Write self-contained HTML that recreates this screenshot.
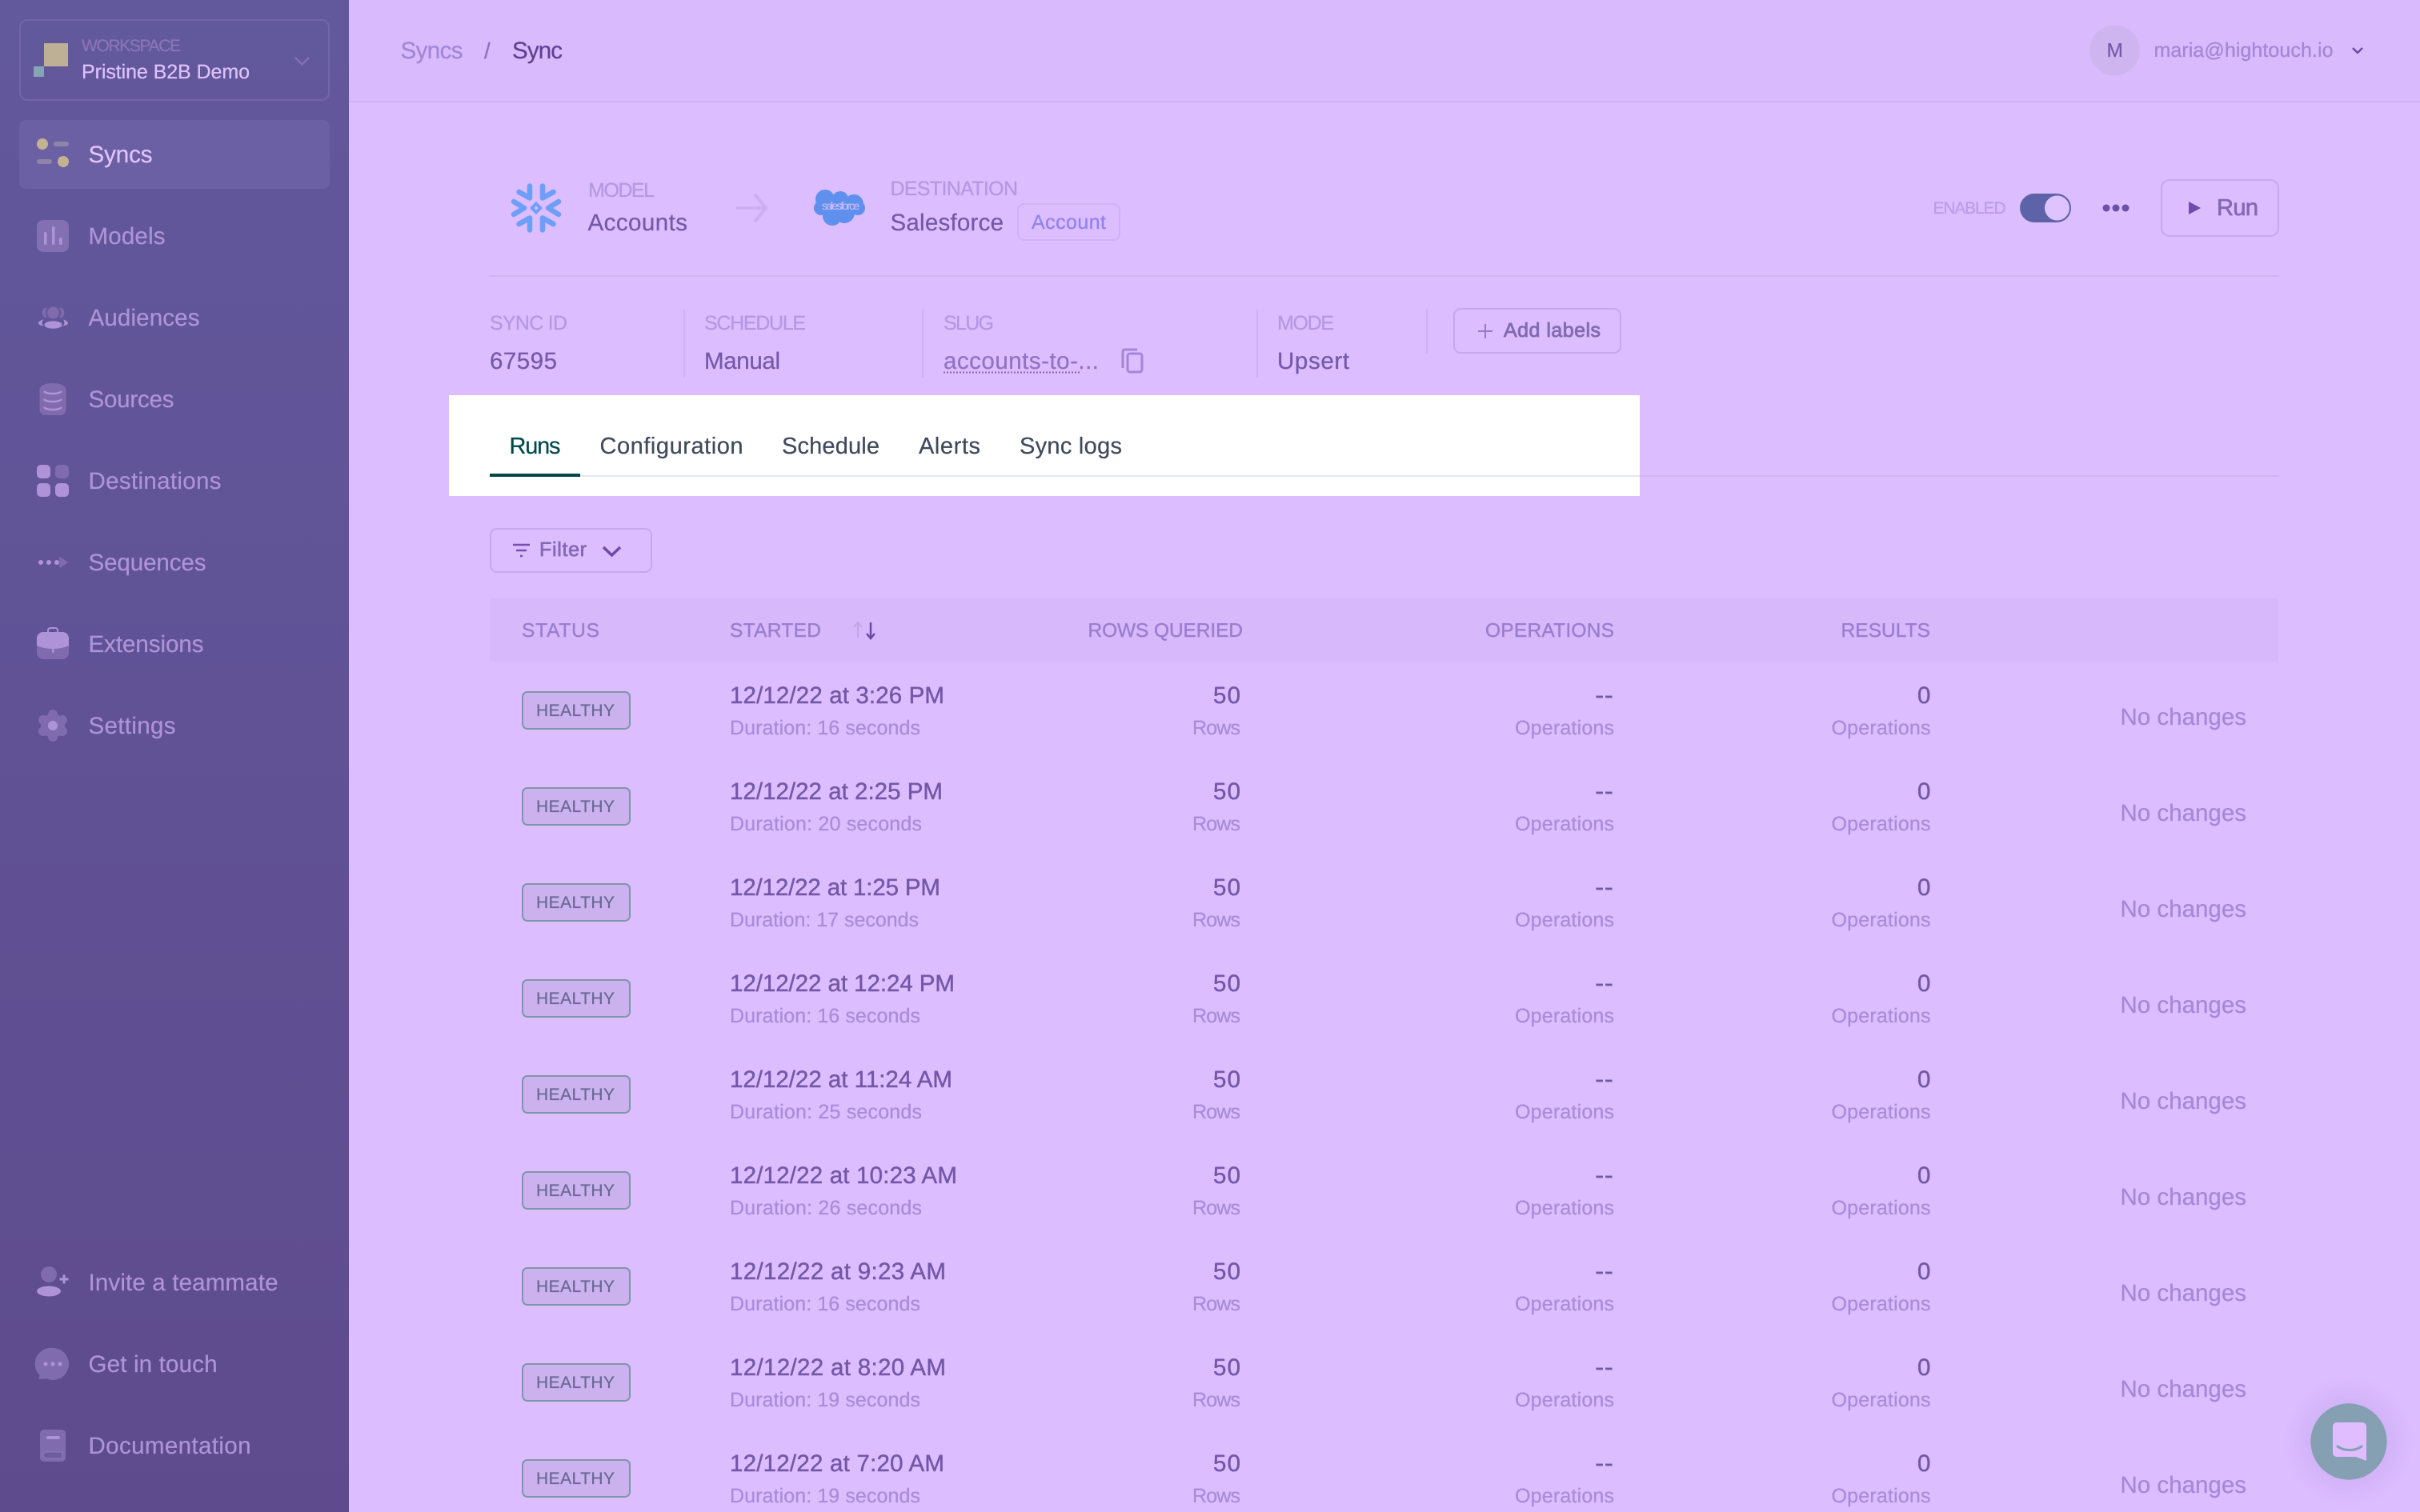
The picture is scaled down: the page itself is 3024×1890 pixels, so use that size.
<!DOCTYPE html>
<html lang="en">
<head>
<meta charset="utf-8">
<title>Sync</title>
<style>
html,body{margin:0;padding:0;width:3024px;height:1890px;overflow:hidden;background:#dcbdff}
svg{display:block;position:absolute;left:0;top:0}
text{font-family:"Liberation Sans",sans-serif;text-rendering:geometricPrecision;fill:currentColor;stroke:currentColor;stroke-width:.25}
.nav{font-size:29.500px;color:#ae93d8}
.lb{font-size:25px;color:#b597e3}
.val{font-size:29.500px;color:#7458a9}
.hd{font-size:24.500px;color:#9a7dd0;stroke-width:.4}
.d{font-size:29.500px;color:#7357a8;stroke-width:.45}
.dd{font-size:34px;color:#7357a8}
.s{font-size:25px;color:#a88bda}
.n{font-size:29.500px;color:#a587d8}
.hl{font-size:21px;color:#6a6894}
.b{fill:#cbb2ee;stroke:#7f96a8;stroke-width:2}
.tab{font-size:29px;color:#414a5c}
.il{fill:#ae93d8}
.im{fill:#7f6bae}
</style>
</head>
<body>
<svg xmlns="http://www.w3.org/2000/svg" width="3024" height="1890" viewBox="0 0 3024 1890">
<defs>
<linearGradient id="sb" x1="0" y1="0" x2="0" y2="1"><stop offset="0" stop-color="#62589c"/><stop offset="1" stop-color="#5e4b8d"/></linearGradient>
<radialGradient id="sh"><stop offset="0" stop-color="#c7a6ec"/><stop offset=".55" stop-color="#cfaef5"/><stop offset="1" stop-color="#dcbdff"/></radialGradient>
</defs>

<!-- main background -->
<rect width="3024" height="1890" fill="#dcbdff"/>
<rect x="436" y="0" width="2588" height="126" fill="#d9bafc"/>
<rect x="436" y="126" width="2588" height="2" fill="#d2b2f5"/>

<!-- sidebar -->
<rect width="436" height="1890" fill="url(#sb)"/>
<rect x="25" y="25" width="386" height="100" rx="9" fill="none" stroke="#7465ab" stroke-width="2"/>
<rect x="55" y="54" width="30" height="29" fill="#bdb094"/>
<rect x="42" y="83" width="13" height="13" fill="#86a5b3"/>
<text x="102" y="64" font-size="21" style="color:#8a75b8" textLength="124">WORKSPACE</text>
<text x="102" y="98" font-size="25" style="color:#dfc2fc" textLength="210">Pristine B2B Demo</text>
<path d="M369 72l8.500 8.500 8.500-8.500" fill="none" stroke="#8570b5" stroke-width="2.500"/>

<rect x="24" y="150" width="388" height="86" rx="8" fill="#6b60a3"/>
<circle cx="53" cy="180" r="7" fill="#c2b391"/><rect x="67" y="177" width="19" height="6" rx="3" fill="#8f83a8"/>
<rect x="46" y="199" width="19" height="6" rx="3" fill="#8f83a8"/><circle cx="79" cy="202" r="7" fill="#c2b391"/>
<text x="110.500" y="203" font-size="29.500" style="color:#e0c3ff" textLength="80">Syncs</text>

<rect x="46" y="275" width="40" height="40" rx="8" fill="#8270b3"/>
<rect x="55" y="290" width="3.500" height="16" rx="1.500" class="il"/><rect x="65" y="283" width="3.500" height="23" rx="1.500" class="il"/><rect x="74" y="297" width="3.500" height="9" rx="1.500" class="il"/>
<text class="nav" x="110.500" y="305" textLength="96">Models</text>

<circle cx="66.500" cy="391" r="7.500" class="im"/>
<path d="M56.500 384.500c-5 3-5 10 0 13l2.500-1c-3-3-3-8 0-11zM76.500 384.500c5 3 5 10 0 13l-2.500-1c3-3 3-8 0-11z" class="im"/>
<ellipse cx="66.500" cy="406" rx="11" ry="4.800" class="il"/>
<path d="M54 399.500c-4 1-6 3-6 4.500s3 3 7 3.500c-1.500-1-2.500-2-2.500-3.500 0-1.500.5-3 1.500-4.500zM79 399.500c4 1 6 3 6 4.500s-3 3-7 3.500c1.500-1 2.500-2 2.500-3.500 0-1.500-.5-3-1.500-4.500z" class="il"/>
<text class="nav" x="110.500" y="407" textLength="139">Audiences</text>

<path d="M49.500 487c0-5 7-8 16.500-8s16.500 3 16.500 8v25c0 4-3 7-7 7h-19c-4 0-7-3-7-7z" class="im"/>
<path d="M55 489c3 4 19 4 22 0M55 499c3 4 19 4 22 0M55 509c3 4 19 4 22 0" fill="none" stroke="#ae93d8" stroke-width="2.500"/>
<text class="nav" x="110.500" y="509" textLength="107">Sources</text>

<rect x="46" y="581" width="17" height="17" rx="5" class="il"/><rect x="69" y="581" width="17" height="17" rx="5" class="im"/>
<rect x="46" y="604" width="17" height="17" rx="5" class="il"/><rect x="69" y="604" width="17" height="17" rx="5" class="il"/>
<text class="nav" x="110.500" y="611" textLength="166">Destinations</text>

<circle cx="51" cy="703" r="3" class="il"/><circle cx="61" cy="703" r="3" class="il"/><circle cx="71" cy="703" r="3" class="il"/>
<path d="M75 697l9 6-9 6z" class="im" stroke="#7f6bae" stroke-width="1.500" stroke-linejoin="round"/>
<text class="nav" x="110.500" y="713" textLength="147">Sequences</text>

<path d="M60 790v-2c0-1.500 1-3 3-3h6c2 0 3 1.500 3 3v2" fill="none" stroke="#ae93d8" stroke-width="2"/>
<rect x="46" y="790" width="40" height="34" rx="8" class="im"/>
<path d="M46 798c0-4.500 3.500-8 8-8h24c4.500 0 8 3.500 8 8v9c-6 2.500-12 4-20 4s-14-1.500-20-4z" class="il"/>
<rect x="65" y="811" width="2.500" height="5" rx="1" class="il"/>
<text class="nav" x="110.500" y="815" textLength="144">Extensions</text>

<g class="im"><circle cx="66" cy="907" r="15"/><circle cx="66" cy="893" r="6"/><circle cx="66" cy="921" r="6"/><circle cx="54" cy="900" r="6"/><circle cx="78" cy="900" r="6"/><circle cx="54" cy="914" r="6"/><circle cx="78" cy="914" r="6"/></g>
<circle cx="66" cy="907" r="6" class="il"/>
<text class="nav" x="110.500" y="917" textLength="109">Settings</text>

<circle cx="61" cy="1593" r="10" class="im"/>
<ellipse cx="61" cy="1614" rx="15" ry="6.500" class="il"/>
<path d="M80 1593.500v11M74.500 1599h11" stroke="#ae93d8" stroke-width="3" fill="none"/>
<text class="nav" x="110.500" y="1613" textLength="237">Invite a teammate</text>

<path d="M66 1685a20 20 0 1 1-8 38.300c-3 .700-7 .700-10 .200 1-1.500 1.500-3 1.500-4.500A20 20 0 0 1 66 1685z" class="im"/>
<circle cx="57" cy="1705" r="2.500" class="il"/><circle cx="66" cy="1705" r="2.500" class="il"/><circle cx="75" cy="1705" r="2.500" class="il"/>
<text class="nav" x="110.500" y="1715" textLength="161">Get in touch</text>

<rect x="50" y="1787" width="32" height="40" rx="5" class="im"/>
<rect x="58" y="1795" width="17" height="4" rx="2" class="il"/>
<path d="M78 1815h-20a4 4 0 0 0 0 8h20z" fill="#6f5c9e" stroke="#8f7cc0" stroke-width="1"/>
<text class="nav" x="110.500" y="1817" textLength="203">Documentation</text>

<!-- breadcrumb / user -->
<text x="500.500" y="73" font-size="29.500" style="color:#a285d6" textLength="78">Syncs</text>
<text x="605" y="73" font-size="28" style="color:#8d6fc0">/</text>
<text x="640" y="73" font-size="29.500" style="color:#5e3f92" textLength="63">Sync</text>
<circle cx="2642.500" cy="63" r="31.500" fill="#cfb5ef"/>
<text x="2632.500" y="71" font-size="24.500" style="color:#745aa9" textLength="21">M</text>
<text x="2691.500" y="71" font-size="25" style="color:#a285d6" textLength="224">maria@hightouch.io</text>
<path d="M2940 60l6 6 6-6" fill="none" stroke="#6d4ba9" stroke-width="2.500"/>

<!-- model / destination -->
<g fill="none" stroke="#6d9ff9" stroke-width="6.500" stroke-linecap="round" stroke-linejoin="round">
<path d="M662 232.500v15L648.500 240M678 232.500v15L691.500 240M662 287.500v-15L648.500 280M678 287.500v-15L691.500 280M642 252l13 8-13 8M698 252l-13 8 13 8"/>
</g>
<path fill-rule="evenodd" d="M670 252l8 8-8 8-8-8zM670 257.500l-2.500 2.500 2.500 2.500 2.500-2.500z" fill="#6d9ff9"/>
<text class="lb" x="735" y="246" textLength="83">MODEL</text>
<text class="val" x="734.500" y="288" textLength="124.500">Accounts</text>
<path d="M920 260h36M943 243l14 17-14 17" fill="none" stroke="#cdaef3" stroke-width="4"/>
<g fill="#5f90ee"><circle cx="1031" cy="249" r="12"/><circle cx="1050" cy="249" r="10"/><circle cx="1067" cy="255" r="12"/><circle cx="1072" cy="260" r="9"/><circle cx="1040" cy="270" r="12"/><circle cx="1055" cy="266" r="13"/><circle cx="1026" cy="260" r="9"/><circle cx="1045" cy="258" r="15"/></g>
<text x="1027" y="262" font-size="14" style="color:#d3bff5;stroke-width:0" textLength="47">salesforce</text>
<text class="lb" x="1112.500" y="244" textLength="159.500">DESTINATION</text>
<text class="val" x="1112.500" y="288" textLength="141.500">Salesforce</text>
<rect x="1272" y="255" width="127" height="45" rx="8" fill="none" stroke="#d1b1f6" stroke-width="2"/>
<text x="1289" y="286" font-size="25" style="color:#8f82f0" textLength="93">Account</text>

<text x="2415.500" y="267" font-size="21" style="color:#bb9de8" textLength="91">ENABLED</text>
<rect x="2524" y="242" width="64" height="36" rx="18" fill="#5e63a7"/>
<circle cx="2570.500" cy="260" r="15.500" fill="#dfc3ff"/>
<circle cx="2632" cy="260" r="4.500" fill="#6d4ea8"/><circle cx="2644" cy="260" r="4.500" fill="#6d4ea8"/><circle cx="2656" cy="260" r="4.500" fill="#6d4ea8"/>
<rect x="2701" y="225" width="146" height="70" rx="10" fill="none" stroke="#c5a8ed" stroke-width="2"/>
<path d="M2735 252l15 8-15 8z" fill="#6d4ba9"/>
<text x="2770" y="269" font-size="29" style="color:#8468b6;stroke-width:.7" textLength="52">Run</text>

<rect x="612" y="344" width="2235" height="2" fill="#d2b2f5"/>

<!-- metadata -->
<text class="lb" x="612" y="412" textLength="97">SYNC ID</text>
<text class="val" x="612" y="461" textLength="84">67595</text>
<rect x="854" y="386" width="2" height="86" fill="#d2b2f5"/>
<text class="lb" x="880" y="412" textLength="127">SCHEDULE</text>
<text class="val" x="880" y="461" textLength="95">Manual</text>
<rect x="1152" y="386" width="2" height="86" fill="#d2b2f5"/>
<text class="lb" x="1179" y="412" textLength="63">SLUG</text>
<text x="1179" y="461" font-size="29.500" style="color:#9072c4" textLength="194">accounts-to-...</text>
<path d="M1179 465.500H1349" stroke="#8668ba" stroke-width="2" stroke-dasharray="2 2" fill="none"/>
<rect x="1409" y="442" width="18" height="23" rx="3" fill="none" stroke="#a485d8" stroke-width="3"/>
<path d="M1403 460v-20c0-2 1-3 3-3h15" fill="none" stroke="#a485d8" stroke-width="3"/>
<rect x="1570" y="386" width="2" height="86" fill="#d2b2f5"/>
<text class="lb" x="1596" y="412" textLength="71">MODE</text>
<text class="val" x="1596" y="461" textLength="90">Upsert</text>
<rect x="1782" y="386" width="2" height="56" fill="#d2b2f5"/>
<rect x="1817" y="386" width="208" height="55" rx="8" fill="none" stroke="#c5a8ed" stroke-width="2"/>
<path d="M1856 405v18M1847 414h18" stroke="#9679c8" stroke-width="2" fill="none"/>
<text x="1879" y="421" font-size="25" style="color:#806ab0;stroke-width:.8" textLength="121">Add labels</text>

<!-- tabs -->
<rect x="2049" y="594" width="798" height="2" fill="#d2b2f5"/>
<rect x="561" y="494" width="1488" height="126" fill="#ffffff"/>
<rect x="612" y="594" width="1437" height="2" fill="#e5e8f2"/>
<rect x="612" y="592" width="113" height="4" fill="#00474c"/>
<text x="636.500" y="567" font-size="29" style="color:#004a4d" textLength="64">Runs</text>
<text class="tab" x="749.500" y="567" textLength="179">Configuration</text>
<text class="tab" x="977" y="567" textLength="122">Schedule</text>
<text class="tab" x="1148" y="567" textLength="77">Alerts</text>
<text class="tab" x="1274" y="567" textLength="128">Sync logs</text>

<!-- filter -->
<rect x="613" y="661" width="201" height="54" rx="8" fill="none" stroke="#c5a8ed" stroke-width="2"/>
<path d="M641 681h21M645 688h13M650 695h3" stroke="#7650ae" stroke-width="2.500" fill="none"/>
<text x="674" y="695" font-size="25" style="color:#8468b6;stroke-width:.7" textLength="59">Filter</text>
<path d="M754 684l10.500 10 10.500-10" fill="none" stroke="#6d4aa8" stroke-width="3.500"/>

<!-- table head -->
<rect x="612" y="748" width="2235" height="79" rx="3" fill="#d6b8fb"/>
<text class="hd" x="652" y="796" textLength="97">STATUS</text>
<text class="hd" x="912" y="796" textLength="114">STARTED</text>
<path d="M1072 797v-18M1067 784l5-6 5 6" fill="none" stroke="#c3a4ec" stroke-width="2"/>
<path d="M1088 778v19M1083 792l5 6 5-6" fill="none" stroke="#6a4aa6" stroke-width="2.500"/>
<text class="hd" x="1359.500" y="796" textLength="193.500">ROWS QUERIED</text>
<text class="hd" x="1856" y="796" textLength="161">OPERATIONS</text>
<text class="hd" x="2300.500" y="796" textLength="111.500">RESULTS</text>

<!-- rows -->
<g>
<rect class="b" x="653" y="865" width="134" height="46" rx="6"/><text class="hl" x="670" y="895" textLength="98">HEALTHY</text>
<text class="d" x="912" y="879" textLength="268">12/12/22 at 3:26 PM</text><text class="s" x="912" y="918" textLength="238">Duration: 16 seconds</text>
<text class="d" x="1516" y="879" textLength="34">50</text><text class="s" x="1490" y="918" textLength="60">Rows</text>
<text class="dd" x="1993" y="880" textLength="23">--</text><text class="s" x="1893" y="918" textLength="124">Operations</text>
<text class="d" x="2396" y="879">0</text><text class="s" x="2288.500" y="918" textLength="124">Operations</text>
<text class="n" x="2649.500" y="906" textLength="157.500">No changes</text>
</g>
<g transform="translate(0,120)">
<rect class="b" x="653" y="865" width="134" height="46" rx="6"/><text class="hl" x="670" y="895" textLength="98">HEALTHY</text>
<text class="d" x="912" y="879" textLength="266">12/12/22 at 2:25 PM</text><text class="s" x="912" y="918" textLength="240">Duration: 20 seconds</text>
<text class="d" x="1516" y="879" textLength="34">50</text><text class="s" x="1490" y="918" textLength="60">Rows</text>
<text class="dd" x="1993" y="880" textLength="23">--</text><text class="s" x="1893" y="918" textLength="124">Operations</text>
<text class="d" x="2396" y="879">0</text><text class="s" x="2288.500" y="918" textLength="124">Operations</text>
<text class="n" x="2649.500" y="906" textLength="157.500">No changes</text>
</g>
<g transform="translate(0,240)">
<rect class="b" x="653" y="865" width="134" height="46" rx="6"/><text class="hl" x="670" y="895" textLength="98">HEALTHY</text>
<text class="d" x="912" y="879" textLength="263">12/12/22 at 1:25 PM</text><text class="s" x="912" y="918" textLength="236">Duration: 17 seconds</text>
<text class="d" x="1516" y="879" textLength="34">50</text><text class="s" x="1490" y="918" textLength="60">Rows</text>
<text class="dd" x="1993" y="880" textLength="23">--</text><text class="s" x="1893" y="918" textLength="124">Operations</text>
<text class="d" x="2396" y="879">0</text><text class="s" x="2288.500" y="918" textLength="124">Operations</text>
<text class="n" x="2649.500" y="906" textLength="157.500">No changes</text>
</g>
<g transform="translate(0,360)">
<rect class="b" x="653" y="865" width="134" height="46" rx="6"/><text class="hl" x="670" y="895" textLength="98">HEALTHY</text>
<text class="d" x="912" y="879" textLength="281">12/12/22 at 12:24 PM</text><text class="s" x="912" y="918" textLength="238">Duration: 16 seconds</text>
<text class="d" x="1516" y="879" textLength="34">50</text><text class="s" x="1490" y="918" textLength="60">Rows</text>
<text class="dd" x="1993" y="880" textLength="23">--</text><text class="s" x="1893" y="918" textLength="124">Operations</text>
<text class="d" x="2396" y="879">0</text><text class="s" x="2288.500" y="918" textLength="124">Operations</text>
<text class="n" x="2649.500" y="906" textLength="157.500">No changes</text>
</g>
<g transform="translate(0,480)">
<rect class="b" x="653" y="865" width="134" height="46" rx="6"/><text class="hl" x="670" y="895" textLength="98">HEALTHY</text>
<text class="d" x="912" y="879" textLength="278">12/12/22 at 11:24 AM</text><text class="s" x="912" y="918" textLength="240">Duration: 25 seconds</text>
<text class="d" x="1516" y="879" textLength="34">50</text><text class="s" x="1490" y="918" textLength="60">Rows</text>
<text class="dd" x="1993" y="880" textLength="23">--</text><text class="s" x="1893" y="918" textLength="124">Operations</text>
<text class="d" x="2396" y="879">0</text><text class="s" x="2288.500" y="918" textLength="124">Operations</text>
<text class="n" x="2649.500" y="906" textLength="157.500">No changes</text>
</g>
<g transform="translate(0,600)">
<rect class="b" x="653" y="865" width="134" height="46" rx="6"/><text class="hl" x="670" y="895" textLength="98">HEALTHY</text>
<text class="d" x="912" y="879" textLength="284">12/12/22 at 10:23 AM</text><text class="s" x="912" y="918" textLength="240">Duration: 26 seconds</text>
<text class="d" x="1516" y="879" textLength="34">50</text><text class="s" x="1490" y="918" textLength="60">Rows</text>
<text class="dd" x="1993" y="880" textLength="23">--</text><text class="s" x="1893" y="918" textLength="124">Operations</text>
<text class="d" x="2396" y="879">0</text><text class="s" x="2288.500" y="918" textLength="124">Operations</text>
<text class="n" x="2649.500" y="906" textLength="157.500">No changes</text>
</g>
<g transform="translate(0,720)">
<rect class="b" x="653" y="865" width="134" height="46" rx="6"/><text class="hl" x="670" y="895" textLength="98">HEALTHY</text>
<text class="d" x="912" y="879" textLength="270">12/12/22 at 9:23 AM</text><text class="s" x="912" y="918" textLength="238">Duration: 16 seconds</text>
<text class="d" x="1516" y="879" textLength="34">50</text><text class="s" x="1490" y="918" textLength="60">Rows</text>
<text class="dd" x="1993" y="880" textLength="23">--</text><text class="s" x="1893" y="918" textLength="124">Operations</text>
<text class="d" x="2396" y="879">0</text><text class="s" x="2288.500" y="918" textLength="124">Operations</text>
<text class="n" x="2649.500" y="906" textLength="157.500">No changes</text>
</g>
<g transform="translate(0,840)">
<rect class="b" x="653" y="865" width="134" height="46" rx="6"/><text class="hl" x="670" y="895" textLength="98">HEALTHY</text>
<text class="d" x="912" y="879" textLength="270">12/12/22 at 8:20 AM</text><text class="s" x="912" y="918" textLength="238">Duration: 19 seconds</text>
<text class="d" x="1516" y="879" textLength="34">50</text><text class="s" x="1490" y="918" textLength="60">Rows</text>
<text class="dd" x="1993" y="880" textLength="23">--</text><text class="s" x="1893" y="918" textLength="124">Operations</text>
<text class="d" x="2396" y="879">0</text><text class="s" x="2288.500" y="918" textLength="124">Operations</text>
<text class="n" x="2649.500" y="906" textLength="157.500">No changes</text>
</g>
<g transform="translate(0,960)">
<rect class="b" x="653" y="865" width="134" height="46" rx="6"/><text class="hl" x="670" y="895" textLength="98">HEALTHY</text>
<text class="d" x="912" y="879" textLength="268">12/12/22 at 7:20 AM</text><text class="s" x="912" y="918" textLength="238">Duration: 19 seconds</text>
<text class="d" x="1516" y="879" textLength="34">50</text><text class="s" x="1490" y="918" textLength="60">Rows</text>
<text class="dd" x="1993" y="880" textLength="23">--</text><text class="s" x="1893" y="918" textLength="124">Operations</text>
<text class="d" x="2396" y="879">0</text><text class="s" x="2288.500" y="918" textLength="124">Operations</text>
<text class="n" x="2649.500" y="906" textLength="157.500">No changes</text>
</g>

<!-- chat launcher -->
<circle cx="2935" cy="1802" r="82" fill="url(#sh)" opacity=".7"/>
<circle cx="2935" cy="1802" r="47.700" fill="#85a0b3"/>
<path d="M2920 1778h32a5 5 0 0 1 5 5v43l-13-5h-24a5 5 0 0 1-5-5v-33a5 5 0 0 1 5-5z" fill="#dfbdff"/>
<path d="M2921 1808c8 6 22 6 30 0" fill="none" stroke="#85a0b3" stroke-width="3" stroke-linecap="round"/>
</svg>
</body>
</html>
